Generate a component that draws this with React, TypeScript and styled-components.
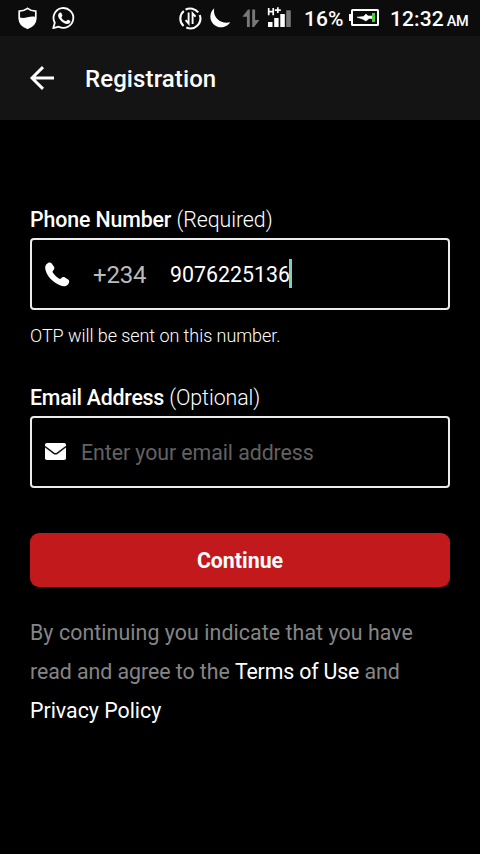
import React from "react";
import styled, { createGlobalStyle } from "styled-components";

const GlobalStyle = createGlobalStyle`
  * { box-sizing: border-box; }
  body { margin: 0; background: #000; font-family: Roboto, "Liberation Sans", sans-serif; }
`;

const Screen = styled.div`
  width: 480px;
  height: 854px;
  background: #000;
  color: #fff;
  overflow: hidden;
`;

const StatusBar = styled.div`
  height: 36px;
  background: #0c0c0c;
  display: flex;
  align-items: center;
`;

const StatusIcon = styled.svg<{ $gap?: number }>`
  display: block;
  flex: none;
  height: 36px;
  margin-left: ${(p) => p.$gap ?? 0}px;
`;

const StatusText = styled.span<{ $gap: number; $width: number }>`
  flex: none;
  display: flex;
  align-items: baseline;
  width: ${(p) => p.$width}px;
  margin-left: ${(p) => p.$gap}px;
  font-size: 21px;
  font-weight: 500;
  line-height: 36px;
  letter-spacing: 0.1px;
  white-space: nowrap;
  padding-top: 2px;
`;

const Meridiem = styled.span`
  font-size: 14.5px;
  font-weight: 500;
  line-height: 20px;
  margin-left: 3px;
  letter-spacing: -0.5px;
`;

const Header = styled.header`
  height: 84px;
  background: #141414;
  display: flex;
  align-items: center;
  padding-left: 29px;
`;

const Title = styled.h1`
  margin: 0 0 0 30px;
  font-size: 24px;
  font-weight: 500;
  line-height: 32px;
  letter-spacing: 0.1px;
  padding-top: 1px;
`;

const Form = styled.main`
  padding: 85px 30px 0;
`;

const Label = styled.label<{ $spacing: number }>`
  display: block;
  height: 33px;
  line-height: 30px;
  font-size: 21.33px;
  font-weight: 500;
  letter-spacing: ${(p) => p.$spacing}px;
`;

const Note = styled.span`
  font-weight: 300;
  letter-spacing: -0.05px;
`;

const Field = styled.div`
  height: 72px;
  border: 2px solid #ececec;
  border-radius: 4px;
  display: flex;
  align-items: center;
  padding-left: 13px;
`;

const DialCode = styled.span`
  margin-left: 23px;
  margin-top: 1px;
  width: 77px;
  font-size: 24px;
  letter-spacing: -0.2px;
  color: #bbb;
`;

const PhoneValue = styled.span`
  margin-top: 1px;
  width: 119px;
  font-size: 21.33px;
`;

const Caret = styled.span`
  width: 3px;
  height: 29px;
  margin-top: -1px;
  background: #80cbc4;
`;

const EmailInput = styled.input`
  flex: 1;
  margin: 1px 0 0 15px;
  padding: 0;
  border: 0;
  outline: 0;
  background: transparent;
  color: #fff;
  font-family: inherit;
  font-size: 21.33px;
  letter-spacing: -0.07px;
  &::placeholder { color: #626262; opacity: 1; }
`;

const Hint = styled.p`
  margin: 14px 0 35px;
  line-height: 24px;
  height: 24px;
  font-size: 18px;
  font-weight: 300;
  letter-spacing: -0.06px;
`;

const ContinueButton = styled.button`
  display: block;
  width: 100%;
  height: 54px;
  margin-top: 45px;
  padding: 1px 0 0;
  border: 0;
  border-radius: 9px;
  background: #c2191c;
  color: #fff;
  font-family: inherit;
  font-size: 21.33px;
  font-weight: 700;
`;

const Legal = styled.p`
  margin: 26px 0 0;
  font-size: 21.33px;
  line-height: 39px;
  color: #858585;
`;

const LegalText = styled.span<{ $spacing: number }>`
  letter-spacing: ${(p) => p.$spacing}px;
`;

const LegalLink = styled.a<{ $spacing?: number }>`
  color: #fff;
  letter-spacing: ${(p) => p.$spacing ?? 0}px;
`;

export default function App() {
  return (
    <>
      <GlobalStyle />
      <Screen>
        <StatusBar>
          <StatusIcon $gap={17} width="22" viewBox="17 0 22 36">
            <path d="M19.2 11.2Q24 11 27.5 8.3Q31 11 35.8 11.2V18.5Q35.5 25.3 27.5 28.3Q19.5 25.3 19.2 18.5Z" fill="none" stroke="#fff" strokeWidth="1.7" />
            <path d="M19.2 17.3Q23 18.6 27.5 17.3Q32 15.8 35.8 16.8V18.5Q35.5 25.3 27.5 28.3Q19.5 25.3 19.2 18.5Z" fill="#fff" />
          </StatusIcon>
          <StatusIcon $gap={12} width="26" viewBox="51 0 26 36">
            <path d="M53.2 28.2L54.8 22.8A9.9 9.9 0 1 1 58.8 26.7Z" fill="none" stroke="#fff" strokeWidth="1.8" strokeLinejoin="round" />
            <path d="M59.7 12.8C60.5 12.4 61.2 12.5 61.6 13.4L62.4 15.4C62.6 16 61.4 16.9 61.4 17.4C62.5 19.5 64 20.7 66 21.3C66.7 21.1 67.4 19.5 68 19.7L70.2 20.8C70.8 21.2 70.2 23 69 23.6C67.5 24.4 65.6 24.1 63.4 22.8C61 21.4 58.8 18.7 58.2 16.6C57.8 15 58.7 13.3 59.7 12.8Z" fill="#fff" />
          </StatusIcon>
          <StatusIcon $gap={101} width="26" viewBox="178 0 26 36">
            <path d="M185.5 9.7A10 10 0 0 1 198.2 12.3M199.8 15A10 10 0 0 1 186.3 27.5M183.6 26A10 10 0 0 1 183.8 11" fill="none" stroke="#fff" strokeWidth="2.1" />
            <path d="M188.6 12.5V23.5L185.6 20.2M192.6 24V13.5L195.6 16.7" fill="none" stroke="#fff" strokeWidth="1.9" />
          </StatusIcon>
          <StatusIcon $gap={3} width="26" viewBox="207 0 26 36">
            <path d="M214.2 8.3A10.8 10.8 0 1 0 230.3 22.3C220.5 24.7 212.5 17.2 214.2 8.3Z" fill="#fff" />
          </StatusIcon>
          <StatusIcon $gap={9} width="18" viewBox="242 0 18 36">
            <path d="M249.8 27H246.9V16.8H242.4L248 9.5H249.8ZM252.2 9.5H255.1V20H259.5L254 27H252.2Z" fill="#777" />
          </StatusIcon>
          <StatusIcon $gap={6} width="27" viewBox="266 0 27 36">
            <path d="M268.7 8V15.2M273.2 8V15.2M268.7 11.6H273.2M274.8 10.2H280.8M277.8 7.3V13" fill="none" stroke="#fff" strokeWidth="1.7" />
            <path d="M268 22H272.5V27H268ZM274.2 18H278.6V27H274.2ZM280.3 14H284.8V27H280.3Z" fill="#fff" />
            <path d="M286.2 10.3H290.8V27H286.2Z" fill="#777" />
          </StatusIcon>
          <StatusText $gap={11} $width={45}>16%</StatusText>
          <StatusIcon width="31" viewBox="349 0 31 36">
            <rect x="352" y="10" width="26" height="15" rx=".5" fill="none" stroke="#fff" strokeWidth="2" />
            <path d="M349 14H351V21H349Z" fill="#fff" />
            <path d="M357 17.2L363.5 16.6L366 14L368 16H372V18.5H369L366 21L362.5 19Z" fill="#fff" stroke="#fff" strokeWidth=".6" />
            <path d="M372 13H375V22H372Z" fill="#4fce2d" />
          </StatusIcon>
          <StatusText $gap={10} $width={85}>12:32<Meridiem>AM</Meridiem></StatusText>
        </StatusBar>
        <Header>
          <svg width="26" height="26" viewBox="0 0 26 26" fill="none" stroke="#fff" strokeWidth="2.9">
            <path d="M25 13H3M14 2.1L3 13L14 23.9" />
          </svg>
          <Title>Registration</Title>
        </Header>
        <Form>
          <Label $spacing={-0.12}>Phone Number <Note>(Required)</Note></Label>
          <Field>
            <svg width="25" height="25" viewBox="0 0 25 25">
              <path d="M1.7 2.1C3 .4 5.2-.3 6.5 1.3L9 4.7C9.8 6 9.4 7.4 8.2 8.5C7.4 9.3 7.5 10.2 8.1 11.1C9.6 13.3 11.6 15.3 13.8 16.5C14.8 17.1 15.6 16.9 16.4 16C17.4 14.9 18.7 14.8 20 15.5L23.2 17.6C24.8 18.8 24.4 20.7 23 22.4C21.3 24.5 18.2 24.6 15 23.3C7.8 20.4 2.3 14.4.5 8C-.2 5.5.2 3.6 1.7 2.1Z" fill="#fff" />
            </svg>
            <DialCode>+234</DialCode>
            <PhoneValue>9076225136</PhoneValue>
            <Caret />
          </Field>
          <Hint>OTP will be sent on this number.</Hint>
          <Label $spacing={-0.24} htmlFor="email">Email Address <Note>(Optional)</Note></Label>
          <Field>
            <svg width="21" height="20" viewBox="0 0 21 20">
              <rect y="1" width="21" height="17" rx="1.8" fill="#fff" />
              <path d="M0 4.5L8.6 11.1Q10.5 12.5 12.4 11.1L21 4.5" fill="none" stroke="#111" strokeWidth="1.4" />
            </svg>
            <EmailInput id="email" placeholder="Enter your email address" />
          </Field>
          <ContinueButton>Continue</ContinueButton>
          <Legal>
            <LegalText $spacing={0.08}>By continuing you indicate that you have</LegalText>{" "}
            <LegalText $spacing={-0.05}>read and agree to the </LegalText>
            <LegalLink $spacing={-0.17}>Terms of Use</LegalLink>{" "}
            <LegalText $spacing={-0.1}>and</LegalText> <LegalLink>Privacy Policy</LegalLink>
          </Legal>
        </Form>
      </Screen>
    </>
  );
}
